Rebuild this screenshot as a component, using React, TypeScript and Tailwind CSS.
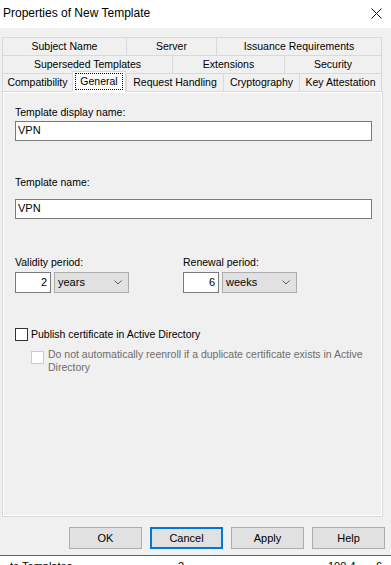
import type { ReactNode } from 'react'

type TabProps = {
  label: string
  className: string
}

function Tab({ label, className }: TabProps) {
  return (
    <div
      className={`h-[18px] shrink-0 border-t border-l border-[#d9d9d9] flex items-center justify-center whitespace-nowrap ${className}`}
    >
      {label}
    </div>
  )
}

function Button({ children, focused }: { children: ReactNode; focused?: boolean }) {
  return (
    <button
      type="button"
      className={
        focused
          ? 'w-[73px] h-[22px] border-2 border-[#0078d7] bg-[#e1e1e1] text-[11px] text-black'
          : 'w-[73px] h-[22px] border border-[#adadad] bg-[#e1e1e1] text-[11px] text-black'
      }
    >
      {children}
    </button>
  )
}

function Chevron() {
  return (
    <svg width="8" height="5" viewBox="0 0 8 5" className="shrink-0">
      <path d="M0.5 0.5 L4 4 L7.5 0.5" fill="none" stroke="#5a5a5a" strokeWidth="1" />
    </svg>
  )
}

function PeriodField({ label, value, unit }: { label: string; value: string; unit: string }) {
  return (
    <div className="flex flex-col">
      <div className="h-[13px] leading-[13px]">{label}</div>
      <div className="mt-[3px] flex gap-[3px]">
        <div className="w-[36px] h-[21px] border border-[#7a7a7a] bg-white flex items-center justify-end pr-[3px] text-[11px]">
          {value}
        </div>
        <div className="w-[75px] h-[21px] border border-[#adadad] bg-[#e1e1e1] flex items-center justify-between pl-[3px] pr-[6px] text-[11px]">
          <span>{unit}</span>
          <Chevron />
        </div>
      </div>
    </div>
  )
}

export default function App() {
  return (
    <div className="w-[391px] h-[565px] overflow-hidden bg-[#f0f0f0] text-black text-[10.5px] font-['Liberation_Sans',Arial,sans-serif] flex flex-col">
      {/* title bar */}
      <div className="h-[28px] shrink-0 bg-white flex items-center justify-between pl-[3px] pr-[9px]">
        <span className="text-[12px] -mt-[2px]">Properties of New Template</span>
        <svg width="11" height="11" viewBox="0 0 11 11" className="-mt-[2px]">
          <path d="M0.5 0.5 L10.5 10.5 M10.5 0.5 L0.5 10.5" stroke="#111" strokeWidth="1" />
        </svg>
      </div>

      <div className="ml-[2px] mt-[9px] w-[381px] flex flex-col">
        {/* tab rows */}
        <div className="flex h-[18px]">
          <Tab label="Subject Name" className="w-[124px]" />
          <Tab label="Server" className="w-[90px]" />
          <Tab label="Issuance Requirements" className="w-[166px] border-r" />
        </div>
        <div className="flex h-[18px]">
          <Tab label="Superseded Templates" className="w-[170px]" />
          <Tab label="Extensions" className="w-[112px]" />
          <Tab label="Security" className="w-[98px] border-r" />
        </div>
        <div className="flex h-[18px] items-start">
          <Tab label="Compatibility" className="w-[70px]" />
          <div className="relative z-10 w-[54px] h-[21px] -mt-[2px] shrink-0 bg-white border-t border-l border-r border-[#d9d9d9] flex items-start justify-center pt-[1px]">
            <span className="h-[17px] px-[4px] border border-dotted border-black flex items-center">General</span>
          </div>
          <Tab label="Request Handling" className="w-[97px]" />
          <Tab label="Cryptography" className="w-[76px]" />
          <Tab label="Key Attestation" className="w-[83px] border-r" />
        </div>

        {/* tab page */}
        <div className="h-[426px] border border-[#d9d9d9] shadow-[inset_0_0_0_1px_#ffffff] bg-[#f0f0f0] pl-[12px] pt-[14px] flex flex-col">
          <div className="h-[13px] leading-[13px]">Template display name:</div>
          <div className="mt-[2px] w-[357px] h-[20px] border border-[#7a7a7a] bg-white flex items-center pl-[2px] pb-[2px] text-[11px]">
            VPN
          </div>

          <div className="mt-[35px] h-[13px] leading-[13px]">Template name:</div>
          <div className="mt-[10px] w-[357px] h-[20px] border border-[#7a7a7a] bg-white flex items-center pl-[2px] pb-[2px] text-[11px]">
            VPN
          </div>

          <div className="mt-[37px] flex gap-[54px]">
            <PeriodField label="Validity period:" value="2" unit="years" />
            <PeriodField label="Renewal period:" value="6" unit="weeks" />
          </div>

          <div className="mt-[35px] flex items-center gap-[3px] h-[13px]">
            <div className="w-[13px] h-[13px] border border-[#333333] bg-white shrink-0" />
            <span className="leading-[13px] whitespace-nowrap">Publish certificate in Active Directory</span>
          </div>

          <div className="mt-[7px] ml-[16px] flex items-start gap-[4px] text-[#6d6d6d]">
            <div className="mt-[3px] w-[13px] h-[13px] border border-[#cccccc] bg-white shrink-0" />
            <div className="leading-[13px]">
              <div className="whitespace-nowrap">Do not automatically reenroll if a duplicate certificate exists in Active</div>
              <div>Directory</div>
            </div>
          </div>
        </div>
      </div>

      {/* buttons */}
      <div className="mt-[10px] flex justify-end gap-[8px] pr-[6px]">
        <Button>OK</Button>
        <Button focused>Cancel</Button>
        <Button>Apply</Button>
        <Button>Help</Button>
      </div>

      {/* list behind the dialog, cut by the window edge */}
      <div className="mt-[6px] flex-1 border-t border-[#0078d7] bg-white">
        <div className="flex text-[11px] pt-[2px] whitespace-nowrap">
          <span className="ml-[10px] w-[168px]">te Templates</span>
          <span className="w-[150px]">2</span>
          <span className="w-[48px]">100.4</span>
          <span>6</span>
        </div>
      </div>
    </div>
  )
}
